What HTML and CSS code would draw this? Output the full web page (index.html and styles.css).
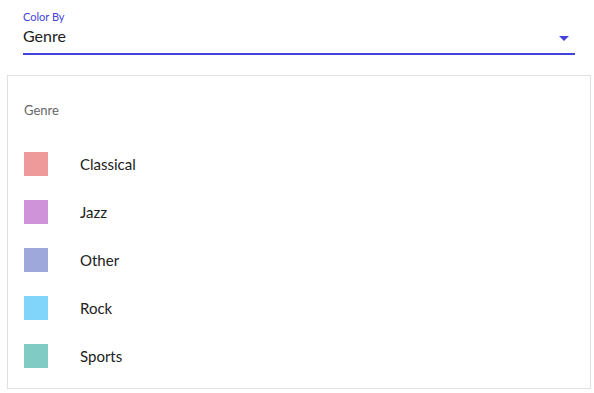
FILE: index.html
```html
<!DOCTYPE html>
<html>
<head>
	<meta charset="utf-8">
	<title>Color By</title>
	<link rel="stylesheet" href="styles.css">
</head>
<body>

	<div class="select">
		<label class="select-label">Color By</label>
		<div class="select-field">
			<span class="select-value">Genre</span>
			<svg class="select-arrow" width="10" height="5" viewBox="0 0 10 5"><path d="M0 0 L10 0 L5 5 Z" fill="#4343dc"/></svg>
		</div>
	</div>

	<div class="legend">
		<div class="legend-title">Genre</div>
		<div class="legend-row">
			<span class="swatch classical"></span>
			<span class="legend-label">Classical</span>
		</div>
		<div class="legend-row">
			<span class="swatch jazz"></span>
			<span class="legend-label">Jazz</span>
		</div>
		<div class="legend-row">
			<span class="swatch other"></span>
			<span class="legend-label">Other</span>
		</div>
		<div class="legend-row">
			<span class="swatch rock"></span>
			<span class="legend-label">Rock</span>
		</div>
		<div class="legend-row">
			<span class="swatch sports"></span>
			<span class="legend-label">Sports</span>
		</div>
	</div>

</body>
</html>
```

FILE: styles.css
```css
* {
	padding: 0;
	margin: 0;
	box-sizing: border-box;
}
body {
	font-family: "Lato", "Open Sans", sans-serif;
	background: #fff;
	color: #212121;
}
.select {
	margin: 10px 19px 0 23px;
}
.select-label {
	display: block;
	font-size: 11px;
	line-height: 14px;
	color: #4343dc;
}
.select-field {
	display: flex;
	align-items: center;
	justify-content: space-between;
	height: 31px;
	border-bottom: 2px solid #4343dc;
	padding-right: 6px;
	padding-bottom: 5px;
}
.select-arrow {
	margin-top: 4px;
}
.select-value {
	font-size: 16px;
	line-height: 20px;
}
.legend {
	margin: 20px 3px 0 7px;
	height: 314px;
	border: 1px solid #e0e0e0;
	padding: 24px 16px 0 16px;
}
.legend-title {
	font-size: 13px;
	line-height: 20px;
	color: #666;
	margin-bottom: 28px;
}
.legend-row {
	display: flex;
	align-items: center;
	height: 48px;
	padding-top: 4px;
	padding-bottom: 20px;
}
.swatch {
	width: 24px;
	height: 24px;
	margin-right: 32px;
}
.legend-label {
	font-size: 15px;
}
.classical { background: #ef9a9a; }
.jazz { background: #ce93d8; }
.other { background: #9fa8da; }
.rock { background: #81d4fa; }
.sports { background: #80cbc4; }
```
